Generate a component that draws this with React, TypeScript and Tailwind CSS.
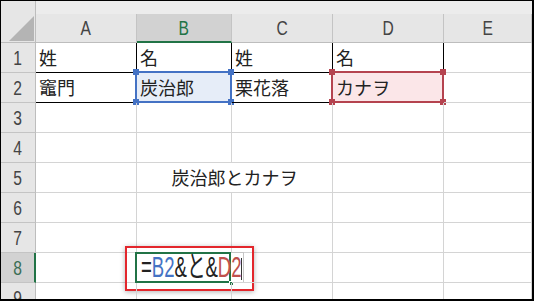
const GRID = 'border-[#d4d4d4]';
const COLS = ['A', 'B', 'C', 'D', 'E'];
const ROWS = [1, 2, 3, 4, 5, 6, 7, 8, 9];

const cjk = "font-['Noto_Sans_CJK_JP','Noto_Sans',sans-serif]";
const latin = "font-['Liberation_Sans','Noto_Sans_CJK_JP',sans-serif]";

// plain cell values, keyed by address
const values: Record<string, string> = {
  A1: '姓',
  B1: '名',
  C1: '姓',
  D1: '名',
  A2: '竈門',
  B2: '炭治郎',
  C2: '栗花落',
  D2: 'カナヲ',
};

function Handles({ color }: { color: string }) {
  const base = `absolute w-[6px] h-[6px] ${color}`;
  return (
    <>
      <span className={`${base} -left-[4px] -top-[4px]`} />
      <span className={`${base} -right-[4px] -top-[4px]`} />
      <span className={`${base} -left-[4px] -bottom-[4px]`} />
      <span className={`${base} -right-[4px] -bottom-[4px]`} />
    </>
  );
}

function ColHeader({ col }: { col: string }) {
  const active = col === 'B';
  return (
    <div
      className={`flex items-center justify-center border-r border-[#c4c4c4] ${
        active ? 'bg-[#d2d2d2] border-b-2 border-b-[#217346] text-[#217346]' : 'bg-[#e6e6e6] border-b border-b-[#bdbdbd] text-[#444]'
      }`}
    >
      <span className={`inline-block scale-x-[0.78] text-[20px] leading-none ${latin}`}>{col}</span>
    </div>
  );
}

function RowHeader({ row }: { row: number }) {
  const active = row === 8;
  return (
    <div
      className={`flex items-center justify-center border-b border-[#c4c4c4] ${
        active ? 'bg-[#d2d2d2] border-r-2 border-r-[#217346] text-[#3c6e55]' : 'bg-[#e6e6e6] border-r border-r-[#bdbdbd] text-[#444]'
      }`}
    >
      <span className={`inline-block scale-x-[0.78] text-[20px] leading-none ${latin}`}>{row}</span>
    </div>
  );
}

function Cell({ col, row }: { col: string; row: number }) {
  const addr = `${col}${row}`;
  const inTable = row <= 2 && col !== 'E';
  const border = inTable ? 'border-black' : GRID;

  return (
    <div className={`relative flex items-center px-[3px] border-r border-b ${border} text-[18px] text-[#222] ${cjk}`}>
      <span className="relative z-10 whitespace-nowrap">{values[addr]}</span>

      {addr === 'B2' && (
        <div className="absolute -left-[2px] -top-[2px] -right-px -bottom-px border-2 border-[#4472c4] bg-[#e6edf8]">
          <Handles color="bg-[#4472c4]" />
        </div>
      )}
      {addr === 'D2' && (
        <div className="absolute -left-[2px] -top-[2px] -right-px -bottom-px border-2 border-[#b5434f] bg-[#fbe6e8]">
          <Handles color="bg-[#b5434f]" />
        </div>
      )}

      {addr === 'B8' && (
        <>
          {/* annotation frame around the formula being typed */}
          <div className="absolute -left-[12px] -top-[7px] w-[129px] h-[45px] border-2 border-[#e3262c] shadow-[0_1px_5px_rgba(0,0,0,0.3)]" />
          {/* edit box overflowing past the cell */}
          <div className="absolute left-full -top-px w-[13px] -bottom-px border-t border-r border-[#c6c6c6] bg-white" />
          <div className="absolute -left-[2px] -top-px -right-0 -bottom-px border-2 border-[#217346]" />
          <span className="absolute -right-[3px] -bottom-[4px] w-[5px] h-[5px] bg-[#217346] border border-white" />
          <span className={`absolute left-[4px] top-0 z-10 inline-block origin-left scale-x-[0.64] whitespace-nowrap text-[29px] leading-[29px] text-[#222] ${latin}`}>
            =<span className="text-[#4472c4]">B2</span>&amp;と&amp;<span className="text-[#c0504d]">D2</span>
          </span>
          <span className="absolute left-[104px] top-[5px] h-[22px] w-px bg-[#333]" />
        </>
      )}
    </div>
  );
}

export default function App() {
  return (
    <div className="w-[534px] h-[301px] overflow-hidden bg-white">
      <div className="w-[534px] h-[301px] overflow-hidden border-t border-l border-r-2 border-b-2 border-black">
        <div className="grid grid-cols-[35px_101px_95px_101px_111px_1fr] grid-rows-[13px_29px_repeat(9,30px)]">
          {/* select-all corner */}
          <div className="row-span-2 relative bg-[#e6e6e6] border-r border-b border-[#bdbdbd]">
            <svg className="absolute left-[8px] top-[15px]" width="25" height="25" viewBox="0 0 25 25">
              <polygon points="0,25 25,0 25,25" fill="#b4b4b4" />
            </svg>
          </div>
          <div className="col-span-5 bg-[#ececec]" />

          {COLS.map((c) => (
            <ColHeader key={c} col={c} />
          ))}

          {ROWS.map((r) => (
            <div key={r} className="contents">
              <RowHeader row={r} />
              {r === 5 ? (
                <>
                  <Cell col="A" row={5} />
                  <div className={`col-span-2 flex items-center justify-center border-r border-b ${GRID} text-[18px] text-[#222] ${cjk}`}>
                    炭治郎とカナヲ
                  </div>
                  <Cell col="D" row={5} />
                  <Cell col="E" row={5} />
                </>
              ) : (
                COLS.map((c) => <Cell key={c} col={c} row={r} />)
              )}
            </div>
          ))}
        </div>
      </div>
    </div>
  );
}
